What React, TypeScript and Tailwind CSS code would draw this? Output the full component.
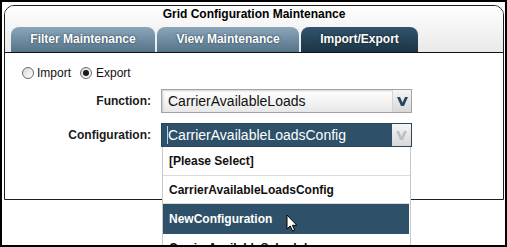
import React from "react";

function Chevron({ color }: { color: string }) {
  return (
    <svg width="11" height="9" viewBox="0 0 11 9">
      <polygon points="0,0 3,0 5.5,5.6 8,0 11,0 7,9 4,9" fill={color} />
    </svg>
  );
}

function Radio({ checked }: { checked?: boolean }) {
  return (
    <span className="w-[12px] h-[12px] rounded-full border border-[#6a6a6a] bg-linear-to-br from-[#d8d8d8] to-white flex items-center justify-center">
      {checked ? <span className="w-[6px] h-[6px] rounded-full bg-[#1a1a1a]" /> : null}
    </span>
  );
}

export default function App() {
  return (
    <div className="w-[507px] h-[247px] border-2 border-black bg-white relative overflow-hidden font-['Liberation_Sans',Arial,sans-serif]">
      <div className="ml-[2px] mt-[3px] w-[500px] h-[195px] border border-[#1e1e1e] rounded-t-[10px] flex flex-col">
        <div className="rounded-t-[9px] bg-linear-to-b from-white to-[#e8e8e8]">
          <div className="h-[21px] pt-px text-center text-[12px] font-bold leading-[14px] text-black">
            Grid Configuration Maintenance
          </div>
          <div className="h-[26px] border-b border-[#111] flex items-start pl-[6px] gap-[2px]">
            <div className="w-[144px] h-[25px] rounded-t-[8px] bg-linear-to-b from-[#8ba6b9] to-[#55748a] text-center text-white font-bold text-[12px] leading-[25px] [text-shadow:0_0_2px_#1c3042]">
              Filter Maintenance
            </div>
            <div className="w-[142px] h-[25px] rounded-t-[8px] bg-linear-to-b from-[#8ba6b9] to-[#55748a] text-center text-white font-bold text-[12px] leading-[25px] [text-shadow:0_0_2px_#1c3042]">
              View Maintenance
            </div>
            <div className="w-[117px] h-[25px] rounded-t-[8px] bg-linear-to-b from-[#33546d] to-[#1c3446] text-center text-white font-bold text-[12px] leading-[25px] [text-shadow:0_0_2px_#0c1822]">
              Import/Export
            </div>
          </div>
        </div>
        <div className="flex-1 bg-white rounded-none pt-[13px]">
          <div className="h-[13px] flex items-center pl-[17px] text-[12px] text-[#111]">
            <Radio />
            <span className="ml-[3px]">Import</span>
            <span className="ml-[9px]">
              <Radio checked />
            </span>
            <span className="ml-[4px]">Export</span>
          </div>
          <div className="mt-[10px] flex items-center">
            <div className="w-[146px] text-right font-bold text-[12px] text-[#1a1a1a]">Function:</div>
            <div className="ml-[10px] w-[251px] h-[24px] border border-[#a3a3a3] flex bg-linear-to-b from-white to-[#e8e8e8] shadow-[inset_1px_1px_2px_rgba(0,0,0,0.18)]">
              <div className="flex-1 pl-[6px] text-[14px] leading-[22px] text-[#111]">CarrierAvailableLoads</div>
              <div className="w-[19px] border-l border-[#d4d4d4] bg-linear-to-b from-[#f5f5f5] to-[#d8d8d8] flex items-center justify-center">
                <Chevron color="#2b475c" />
              </div>
            </div>
          </div>
          <div className="mt-[10px] flex items-center">
            <div className="w-[146px] text-right font-bold text-[12px] text-[#1a1a1a]">Configuration:</div>
            <div className="ml-[10px] w-[251px] h-[24px] relative">
              <div className="w-full h-full border border-[#2a4558] flex bg-[#2e5068]">
                <div className="flex-1 pl-[6px] text-[14px] leading-[22px] text-white relative">
                  <span className="absolute left-[5px] top-[2px] w-px h-[18px] bg-[#b5d6f2]" />
                  CarrierAvailableLoadsConfig
                </div>
                <div className="w-[19px] bg-linear-to-b from-[#f5f5f5] to-[#d8d8d8] flex items-center justify-center">
                  <Chevron color="#b7c3cc" />
                </div>
              </div>
              <div className="absolute left-[1px] top-full w-[249px] bg-white border-x border-[#c9c9c9] z-10 text-[12px] font-bold">
                <div className="h-[29px] leading-[29px] pl-[6px] border-b border-[#dadada] text-[#111]">[Please Select]</div>
                <div className="h-[28px] leading-[28px] pl-[6px] border-b border-[#dadada] text-[#111]">CarrierAvailableLoadsConfig</div>
                <div className="h-[30px] leading-[30px] pl-[6px] mr-px bg-[#2e5068] text-white">NewConfiguration</div>
                <div className="h-[29px] leading-[29px] pl-[6px] text-[#111]">CarrierAvailableSchedule</div>
              </div>
            </div>
          </div>
        </div>
      </div>
      <svg className="absolute left-[284px] top-[212px] z-20" width="12" height="18" viewBox="0 0 12 18">
        <path d="M1 1 L1 15 L4.3 12 L6.6 17 L8.6 16.1 L6.4 11.3 L10.8 11.3 Z" fill="white" stroke="black" strokeWidth="1" strokeLinejoin="miter" />
      </svg>
    </div>
  );
}
